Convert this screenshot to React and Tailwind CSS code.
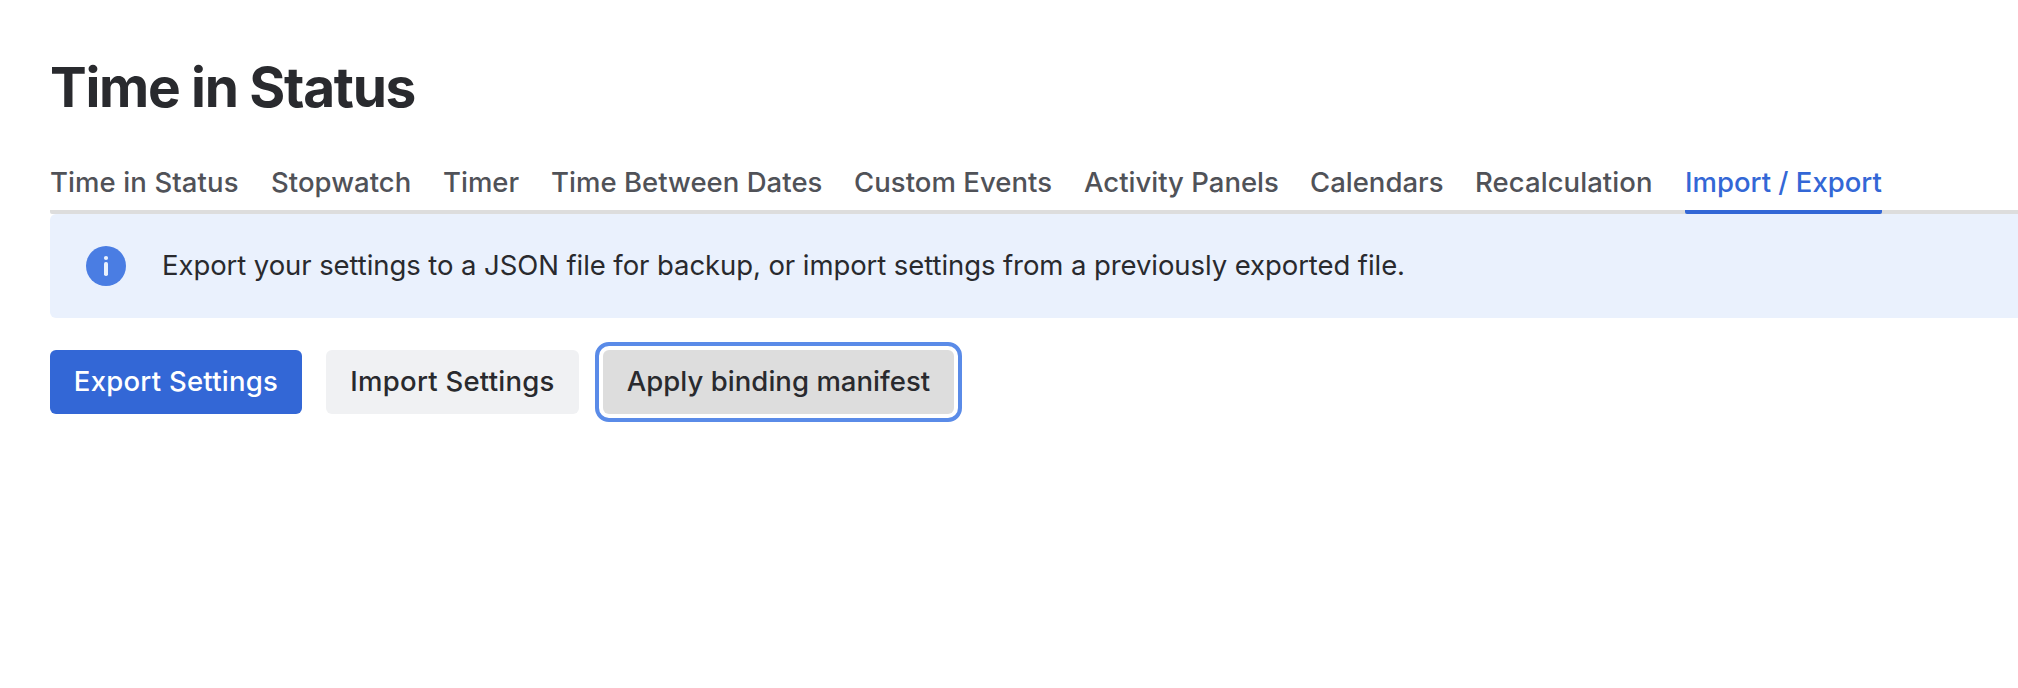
const tabs = [
  { label: "Time in Status", width: "w-[189px]", tracking: "tracking-[0.1px]" },
  { label: "Stopwatch", width: "w-[140px]", tracking: "tracking-[0.05px]" },
  { label: "Timer", width: "w-[76px]", tracking: "tracking-normal" },
  { label: "Time Between Dates", width: "w-[271px]", tracking: "tracking-[0.03px]" },
  { label: "Custom Events", width: "w-[198px]", tracking: "tracking-[0.05px]" },
  { label: "Activity Panels", width: "w-[194px]", tracking: "tracking-normal" },
  { label: "Calendars", width: "w-[133px]", tracking: "tracking-normal" },
  { label: "Recalculation", width: "w-[178px]", tracking: "tracking-[0.07px]" },
  { label: "Import / Export", width: "w-[197px]", tracking: "tracking-normal", active: true },
];

const InfoIcon = () => (
  <svg viewBox="0 0 40 40" className="size-10 shrink-0">
    <circle cx="20" cy="20" r="20" fill="#4a7de3" />
    <circle cx="20" cy="12" r="2.1" fill="#eaf1fd" />
    <rect x="18" y="16" width="4" height="14" rx="1.8" fill="#eaf1fd" />
  </svg>
);

const App = () => {
  return (
    <div className="min-h-screen overflow-hidden bg-white pl-[50px] font-['Inter',sans-serif] text-[27.5px] text-[#292a2e]">
      <h1 className="pt-[55px] text-[55px] leading-[64px] font-bold tracking-[-1.3px]">
        Time in Status
      </h1>

      <nav className="mt-[41px] flex h-[54px] gap-8 rounded-l-xs border-b-4 border-[#dddddd] leading-[44px] font-medium whitespace-nowrap text-[#505258]">
        {tabs.map((tab) => (
          <a
            key={tab.label}
            className={`h-[54px] shrink-0 ${tab.width} ${tab.tracking} ${
              tab.active ? "rounded-xs border-b-4 border-[#3367d6] text-[#3367d6]" : ""
            }`}
          >
            {tab.label}
          </a>
        ))}
      </nav>

      <div className="flex h-[104px] items-center gap-9 rounded-l-md bg-[#eaf1fd] pl-9 tracking-[-0.08px] whitespace-nowrap">
        <InfoIcon />
        <p>Export your settings to a JSON file for backup, or import settings from a previously exported file.</p>
      </div>

      <div className="mt-8 flex gap-6 font-medium whitespace-nowrap">
        <button className="h-16 w-[252px] rounded-md bg-[#3367d6] tracking-[0.25px] text-white">
          Export Settings
        </button>
        <button className="h-16 w-[253px] rounded-md bg-[#f0f1f3] tracking-[0.25px]">
          Import Settings
        </button>
        <button className="h-16 w-[351px] rounded-md bg-[#dddddd] tracking-[0.04px] outline-4 outline-offset-4 outline-[#5a8be8]">
          Apply binding manifest
        </button>
      </div>
    </div>
  );
};

export default App;
